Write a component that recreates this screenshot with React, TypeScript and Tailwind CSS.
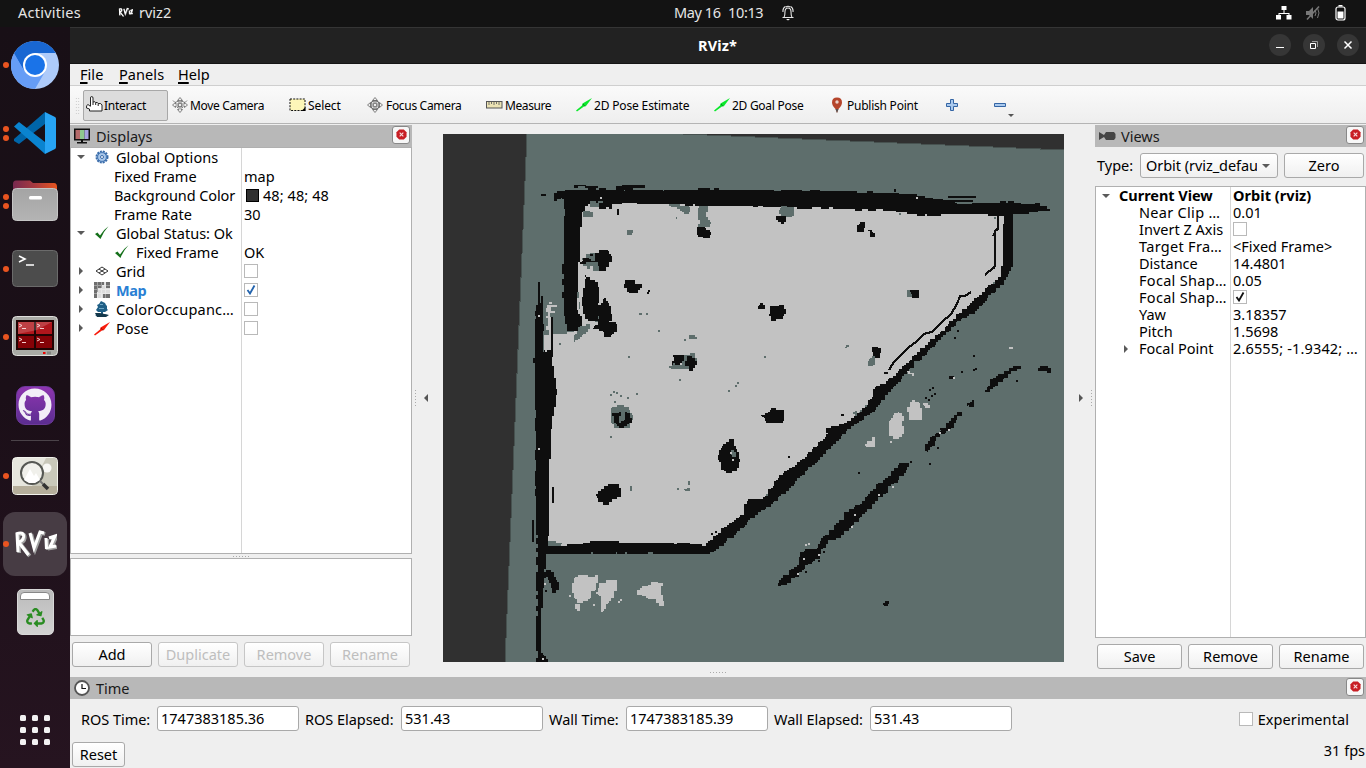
import React from "react";
import { FaGithub, FaRecycle } from "react-icons/fa";

type Pt = [number, number];

/* ---------- occupancy map geometry ---------- */

const CELL = 1.62;
const snap = (v: number) => Math.round(v / CELL) * CELL;

function noise(seed: number) {
  let s = seed * 7919 + 13;
  return () => {
    s = (s * 16807 + 11) % 2147483647;
    return s / 2147483647 - 0.5;
  };
}

// Turns a flat, clockwise x,y list into a closed outline that follows the cell grid.
function cells(flat: number[], amp = 1.6): string {
  const pts: Pt[] = [];
  for (let i = 0; i < flat.length; i += 2) pts.push([flat[i], flat[i + 1]]);
  const rnd = noise(Math.round(flat[0] * 3 + flat[1]));
  let d = "";
  let px = 0;
  let py = 0;
  pts.forEach(([x0, y0], i) => {
    const [x1, y1] = pts[(i + 1) % pts.length];
    const n = Math.max(1, Math.ceil(Math.hypot(x1 - x0, y1 - y0) / 3.2));
    for (let k = 0; k < n; k++) {
      const x = snap(x0 + ((x1 - x0) * k) / n + rnd() * amp);
      const y = snap(y0 + ((y1 - y0) * k) / n + rnd() * amp);
      const xs = x.toFixed(1);
      const ys = y.toFixed(1);
      if (!d) d = `M${xs} ${ys}`;
      else d += (x - px) * (y - py) < 0 ? `V${ys}H${xs}` : `H${xs}V${ys}`;
      px = x;
      py = y;
    }
  });
  return d + "Z";
}

function blob(cx: number, cy: number, rx: number, ry: number): string {
  const flat: number[] = [];
  for (let i = 0; i < 12; i++) {
    const a = (i * Math.PI) / 6;
    flat.push(cx + Math.cos(a) * rx, cy + Math.sin(a) * ry);
  }
  return cells(flat, 2.2);
}

const FREE = [572, 198, 1006, 210, 1006, 270, 970, 305, 940, 333, 905, 365, 872, 399, 840, 429, 800, 467, 755, 504, 712, 546, 544, 549, 544, 334, 574, 333];

const WALLS: number[][] = [
  [553, 195, 560, 192, 570, 190, 590, 189, 615, 190, 635, 190, 680, 190, 710, 189, 760, 190, 797, 190, 848, 192, 890, 193, 914, 195, 930, 199, 960, 204, 990, 203, 1005, 202, 1038, 204, 1044, 207, 1050, 210, 1035, 212, 1013, 214, 1000, 215, 960, 214, 927, 215, 883, 210, 830, 208, 790, 208, 750, 206, 723, 206, 680, 204, 633, 203, 613, 203, 612, 209, 600, 208, 596, 204, 587, 202, 582, 212, 580, 230, 579, 263, 578, 290, 578, 310, 582, 322, 580, 331, 568, 330, 564, 313, 563, 263, 565, 203, 563, 198, 555, 200],
  [546, 546, 580, 545, 592, 541, 613, 542, 653, 543, 693, 544, 712, 547, 712, 552, 707, 554, 673, 554, 633, 553, 613, 553, 593, 553, 573, 554, 546, 554],
  [539, 300, 543, 312, 543, 352, 550, 350, 552, 360, 556, 390, 556, 403, 553, 410, 550, 457, 549, 470, 549, 533, 548, 545, 546, 558, 545, 572, 542, 607, 540, 637, 541, 650, 547, 662, 537, 664, 536, 636, 537, 603, 537, 553, 537, 523, 535, 477, 536, 447, 535, 390, 534, 357, 536, 313],
  [1004, 212, 1013, 213, 1013, 222, 1012, 250, 1012, 265, 1008, 275, 1003, 283, 985, 300, 975, 312, 960, 319, 945, 334, 930, 349, 915, 362, 898, 381, 883, 398, 877, 407, 847, 430, 822, 455, 805, 472, 787, 490, 765, 508, 757, 513, 743, 527, 712, 553, 705, 548, 710, 541, 727, 527, 745, 513, 743, 505, 753, 498, 763, 500, 782, 475, 800, 463, 827, 437, 828, 427, 847, 423, 867, 407, 875, 390, 893, 377, 917, 355, 933, 340, 957, 317, 983, 293, 1000, 277, 1003, 260],
];

const BLACK_SHAPES: number[][] = [
  [572, 185, 599, 187, 599, 188, 573, 187],
  [615, 188, 628, 185, 645, 185, 645, 187, 630, 188, 618, 191],
  [586, 276, 592, 280, 599, 287, 599, 302, 597, 320, 584, 318, 583, 300],
  [604, 298, 607, 304, 612, 310, 612, 318, 608, 322, 618, 325, 618, 330, 608, 336, 602, 330, 592, 328, 600, 320, 599, 310],
  [625, 280, 633, 280, 640, 286, 638, 293, 629, 293, 624, 287],
  [595, 254, 604, 250, 612, 258, 610, 266, 602, 269, 598, 262, 580, 264, 582, 260],
  [697, 227, 706, 228, 711, 233, 707, 238, 697, 235],
  [776, 216, 783, 216, 787, 220, 780, 223],
  [857, 226, 862, 222, 865, 226, 864, 231, 857, 231],
  [867, 229, 871, 232, 875, 236, 871, 236],
  [770, 307, 783, 305, 785, 312, 781, 320, 772, 319, 770, 313],
  [758, 304, 763, 303, 764, 308, 758, 309],
  [871, 347, 878, 348, 881, 350, 878, 358, 872, 355],
  [911, 291, 918, 291, 916, 297, 913, 296],
  [673, 355, 681, 354, 684, 358, 679, 363, 673, 364],
  [686, 357, 693, 357, 696, 363, 691, 370, 686, 365],
  [762, 416, 773, 408, 782, 411, 785, 417, 778, 424, 768, 422],
  [723, 446, 731, 440, 737, 448, 741, 460, 737, 469, 729, 472, 721, 468, 719, 457],
  [596, 495, 605, 486, 619, 485, 620, 496, 606, 504, 597, 501],
  [545, 570, 550, 570, 556, 579, 559, 588, 555, 591, 549, 583],
  [777, 584, 788, 575, 798, 565, 803, 551, 808, 548, 816, 549, 826, 535, 840, 523, 853, 507, 862, 503, 874, 490, 890, 475, 899, 465, 908, 465, 905, 472, 893, 483, 878, 498, 866, 511, 850, 527, 838, 537, 828, 541, 818, 556, 802, 570, 787, 584, 780, 586],
  [924, 451, 930, 440, 938, 432, 950, 424, 955, 416, 961, 412, 959, 418, 950, 429, 939, 436, 931, 445, 927, 451],
  [968, 406, 973, 400, 975, 403, 972, 406],
  [985, 392, 991, 386, 991, 380, 1004, 373, 1014, 366, 1019, 367, 1007, 375, 995, 385, 989, 392],
  [1035, 368, 1046, 366, 1051, 370, 1046, 372, 1039, 370],
  [949, 377, 954, 376, 955, 379, 950, 379],
  [883, 604, 888, 600, 889, 602, 885, 607],
];

const THIN_LINES = [
  "M998 215v14l-3 2v35l-2 3M993 268l-8 7M993 236l4-8",
  "M971 292l-6 4h-5l-3 8-6 10-9 8-10 10-8 2-8 8-8 6-6 6-8 8-5 8",
  "M884 373h4M841 415h3M788 457h2",
  "M539 282v24M542 296v20M552 317v40M533 520v22M553 487v16",
  "M618 209v6M895 189v3M925 201h48M930 205h25M948 197h28M940 203h15M541 195h5",
];

const TEAL_SPOTS: number[][] = [
  [583, 210, 592, 212, 592, 217, 583, 217],
  [590, 202, 602, 201, 600, 207, 590, 207],
  [668, 205, 690, 206, 691, 211, 686, 214, 680, 208],
  [699, 206, 706, 206, 708, 220, 712, 222, 708, 227, 698, 227],
  [780, 207, 793, 207, 793, 216, 786, 218, 780, 216],
  [582, 258, 596, 253, 600, 262, 599, 271, 590, 271, 584, 267],
  [628, 231, 633, 231, 632, 235, 628, 234],
  [673, 218, 677, 218, 676, 219, 672, 219],
  [577, 292, 579, 291, 580, 310, 578, 309],
  [573, 338, 580, 328, 589, 325, 588, 330, 576, 341, 573, 342],
  [593, 318, 603, 317, 605, 325, 598, 326],
  [669, 368, 684, 355, 694, 354, 697, 362, 690, 368, 675, 369],
  [612, 407, 620, 405, 627, 408, 633, 417, 628, 427, 616, 427, 611, 420],
  [688, 338, 692, 336, 697, 338, 690, 339],
  [845, 348, 848, 345, 848, 346, 845, 349],
  [869, 358, 875, 358, 874, 365, 869, 365],
  [907, 291, 914, 290, 913, 296, 907, 296],
  [549, 539, 552, 541, 562, 543, 552, 546, 548, 545],
  [684, 489, 689, 487, 689, 490, 685, 490],
  [630, 487, 633, 487, 633, 490, 630, 490],
];

const FREE_SPOTS: number[][] = [
  [573, 579, 580, 576, 598, 577, 596, 587, 589, 597, 582, 604, 577, 601, 573, 592],
  [575, 606, 579, 605, 579, 611, 575, 610],
  [601, 586, 609, 579, 617, 581, 615, 593, 605, 605, 602, 612, 600, 605, 603, 598, 597, 591],
  [638, 590, 650, 585, 655, 581, 662, 584, 662, 597, 663, 605, 655, 600, 647, 596, 638, 595],
  [891, 419, 898, 412, 902, 415, 903, 425, 901, 439, 893, 439, 889, 430],
  [906, 410, 914, 400, 920, 405, 922, 415, 920, 420, 911, 419],
  [925, 404, 930, 402, 928, 407, 926, 408],
  [865, 445, 873, 438, 874, 446, 866, 448],
  [909, 372, 913, 372, 913, 376, 910, 374],
];

// x, y pairs of single cells
const BLACK_DOTS = [957, 330, 954, 337, 973, 355, 975, 368, 973, 369, 961, 371, 931, 395, 928, 399, 934, 393, 929, 389, 932, 387, 858, 472, 910, 461, 929, 463, 937, 447, 1016, 380, 648, 290, 647, 292, 545, 590, 925, 397, 940, 428, 947, 425, 823, 551, 818, 560, 805, 571, 769, 314, 837, 430, 711, 533, 715, 531];
const TEAL_DOTS = [610, 394, 616, 392, 613, 391, 620, 395, 636, 393, 640, 313, 646, 313, 639, 313, 684, 339, 735, 385, 728, 390, 737, 382, 679, 379, 610, 436, 614, 401, 559, 343, 764, 356, 677, 488, 688, 481, 688, 483, 627, 397, 628, 356, 658, 330, 853, 412, 855, 411, 899, 213, 994, 217, 673, 363];
const FREE_DOTS = [1009, 347, 1011, 347, 916, 197, 953, 377, 600, 197, 538, 448, 544, 583, 542, 658, 939, 432, 948, 429, 892, 486, 854, 514, 851, 526, 818, 554, 803, 558, 805, 544, 808, 543, 618, 601, 620, 599, 593, 604, 596, 592, 878, 494, 680, 363, 730, 452, 732, 459, 569, 595, 890, 441, 797, 573, 538, 315, 545, 350];

const TEAL_OVER: number[][] = [
  [620, 413, 625, 412, 626, 414, 623, 421, 619, 422],
  [731, 450, 735, 453, 734, 456, 731, 454],
  [589, 257, 595, 255, 594, 260, 588, 260],
];

function dots(list: number[]): string {
  let d = "";
  for (let i = 0; i < list.length; i += 2) d += `M${list[i]} ${list[i + 1]}h2v2h-2z`;
  return d;
}

function MapView() {
  return (
    <svg viewBox="443 134 621 528" className="block h-[528px] w-[621px] bg-[#303030]" shapeRendering="crispEdges">
      <path d="M527 134H683L1064 150V662H505Z" fill="#5e6e6c" />
      <path d="M527 134L505 662M683 134L1064 150" stroke="#475250" fill="none" />
      <path d={cells(FREE)} fill="#c2c2c2" />
      <path d="M543 300h22v33h-13v2h-9z" fill="#5e6e6c" />
      <path d="M549 302h3v2h-3zM547 305h10v2h-6v4h4v2h-5v4h3v10h-2v10h-2v-7h-3v-4h2v-8h-2v-2h2v-4h-2zM547 348h2v3h-2z" fill="#c2c2c2" />
      <path d={FREE_SPOTS.map((p) => cells(p, 2.6)).join("")} fill="#c2c2c2" />
      <path d={WALLS.map((p) => cells(p)).join("")} fill="#0e0e0e" />
      <path d={TEAL_SPOTS.map((p) => cells(p, 2)).join("")} fill="#5e6e6c" />
      <path d="M583 266h4v3h3v-3h3v6h4v4h-4v4h-6v-2h-4v24h-4v8h-2v-12h2v-20h-1v-12h5z" fill="#c2c2c2" />
      <path d={BLACK_SHAPES.map((p) => cells(p, 2.4)).join("")} fill="#0e0e0e" />
      <path d={blob(622, 418, 9, 8)} fill="#0e0e0e" />
      <path d={cells([613, 407, 625, 407, 627, 410, 620, 412, 612, 412])} fill="#5e6e6c" />
      <path d={TEAL_OVER.map((p) => cells(p, 1)).join("")} fill="#5e6e6c" />
      <path d={THIN_LINES.join("")} stroke="#0e0e0e" strokeWidth="2.200" fill="none" />
      <path d="M590 322h8v3h-4v3h-4z" fill="#c2c2c2" />
      <path d={dots(TEAL_DOTS)} fill="#5e6e6c" />
      <path d={dots(BLACK_DOTS)} fill="#0e0e0e" />
      <path d={dots(FREE_DOTS)} fill="#c2c2c2" />
    </svg>
  );
}

/* ---------- dock ---------- */

function ChromiumIcon() {
  return (
    <svg viewBox="0 0 48 48" className="size-12">
      <circle cx="24" cy="24" r="24" fill="#aecbfa" />
      <path d="M24 24L3.200 12A24 24 0 0 0 24 48L34.400 30z" fill="#669df6" />
      <path d="M3.200 12A24 24 0 0 1 44.800 12H24L13.600 30z" fill="#1967d2" />
      <path d="M3.200 12L13.600 30 24 24z" fill="#1967d2" />
      <circle cx="24" cy="24" r="12" fill="#fff" />
      <circle cx="24" cy="24" r="10" fill="#1a73e8" />
    </svg>
  );
}

function CodeIcon() {
  return (
    <svg viewBox="0 0 42 42" className="size-[42px]">
      <path d="M0 27L31 0V12L5 32 0 29z" fill="#0065a9" />
      <path d="M5 10L31 30V42L0 14.500z" fill="#0a84d0" />
      <path d="M31 0L41 5Q42 5.500 42 7V35Q42 36.500 41 37L31 42z" fill="#27a4f4" />
    </svg>
  );
}

function FilesIcon() {
  return (
    <svg viewBox="0 0 46 41" className="-mt-px h-[41px] w-[46px]">
      <defs>
        <linearGradient id="fo"><stop stopColor="#77294f" /><stop offset=".5" stopColor="#a83a3f" /><stop offset="1" stopColor="#e8551f" /></linearGradient>
        <linearGradient id="fg" x2="0" y2="1"><stop stopColor="#a4a4a4" /><stop offset="1" stopColor="#b4b4b4" /></linearGradient>
      </defs>
      <path d="M1 14V4Q1 .5 4 .500H18L21 3H42Q45 3 45 7V14z" fill="url(#fo)" />
      <rect x=".5" y="8.500" width="45" height="32" rx="4" fill="url(#fg)" stroke="#c5c5c5" />
      <rect x="17" y="16" width="13" height="3.500" rx="1.500" fill="#fff" />
    </svg>
  );
}

function TerminalIcon() {
  return (
    <svg viewBox="0 0 46 37" className="-mt-px h-[37px] w-[46px]">
      <rect x=".5" y=".5" width="45" height="36" rx="4" fill="#4c4c4c" stroke="#6b6b6b" />
      <path d="M7 6l6 3-6 3M14 15h8" stroke="#fff" strokeWidth="1.600" fill="none" />
    </svg>
  );
}

function TerminatorIcon() {
  const panes: Pt[] = [[6, 6], [24, 6], [6, 20], [24, 20]];
  return (
    <svg viewBox="0 0 46 40" className="-mt-0.5 h-10 w-[46px]">
      <rect x=".5" y=".5" width="45" height="39" rx="4" fill="#a9aaa5" stroke="#dededb" />
      <rect x="4" y="4" width="38" height="30" fill="#210404" />
      {panes.map(([x, y]) => (
        <g key={`${x}-${y}`}>
          <rect x={x} y={y} width="16" height="12" fill={y < 10 ? "#b0161c" : "#850207"} />
          <path d={`M${x + 1} ${y + 2}l3 1.500-3 1.500M${x + 4} ${y + 6.500}h4`} stroke="#f6cccc" fill="none" />
        </g>
      ))}
      <path d="M6 6H40L25 14 6 18z" fill="#fff" opacity=".18" />
      <rect x="31" y="36" width="2.500" height="2" fill="#e00" />
      <rect x="35" y="35.500" width="4" height="3" fill="#838481" />
    </svg>
  );
}

function GithubIcon() {
  return (
    <div className="flex size-[39px] items-center justify-center rounded-[9px] border border-[#6d3a9b] bg-linear-to-b from-[#8e35b0] to-[#5c2d91]">
      <FaGithub className="size-[34px] text-[#f2eef7]" />
    </div>
  );
}

function ViewerIcon() {
  return (
    <svg viewBox="0 0 46 38" className="h-[38px] w-[46px]">
      <rect x=".5" y=".5" width="45" height="37" rx="4" fill="#e6e6de" stroke="#f2f2ec" />
      <path d="M34 1h8q3 0 3 3v25H20z" fill="#c9c8ba" />
      <path d="M1 29H45V34Q45 37 42 37H4Q1 37 1 34z" fill="#b5ae9b" />
      <circle cx="35" cy="11" r="4.500" fill="#f8f8f5" />
      <circle cx="20" cy="16" r="11" fill="#f0f0eb" stroke="#555753" strokeWidth="2" />
      <path d="M12 23l6-11 4 7 2-3 4 7-5 3h-6z" fill="#fff" />
      <path d="M28 24l3 3" stroke="#777" strokeWidth="2" />
      <path d="M31 27l5 5" stroke="#333" strokeWidth="3.500" />
    </svg>
  );
}

function RvizMark({ className }: { className: string }) {
  const strokes = "M4 3L5 22M3 4q8-3 7.500 3-.5 4-5 5l10 13M17 3l4 15L27 2l4 1M33 8l.5 11M36 8l6-2-5 11 6-1";
  return (
    <svg viewBox="0 0 44 28" className={className} fill="none">
      <path d={strokes} stroke="#a2a2a2" strokeWidth="3.800" transform="translate(1.200 1)" />
      <path d={strokes} stroke="#fff" strokeWidth="3.100" />
    </svg>
  );
}

function TrashIcon() {
  return (
    <div className="flex h-[46px] w-[37px] flex-col items-center rounded-[5px] border border-[#d8d8d8] bg-linear-to-b from-[#bbb] to-[#d2d2d2] pt-0.5">
      <div className="h-[8px] w-[30px] rounded-t-[4px] border border-[#888] bg-white" />
      <FaRecycle className="mt-2 size-[19px] text-[#2a8c22]" />
    </div>
  );
}

function DockItem({ dots: count = 1, active = false, children }: { dots?: number; active?: boolean; children: React.ReactNode }) {
  return (
    <div className="flex h-[68px] w-[70px] shrink-0 items-center">
      <div className={`ml-[3px] flex h-16 w-16 items-center rounded-[12px] ${active ? "bg-[#473c44]" : ""}`}>
        <div className="flex w-[6px] flex-col gap-[3px]">
          {Array.from({ length: count }, (_, i) => (
            <span key={i} className="size-[6px] rounded-full bg-[#e95420]" />
          ))}
        </div>
        <div className="flex w-[52px] items-center justify-center">{children}</div>
      </div>
    </div>
  );
}

function Dock() {
  return (
    <nav className="flex w-[70px] shrink-0 flex-col bg-linear-to-b from-[#180f16] via-[#1b0f18] to-[#261420] pt-1">
      <DockItem><ChromiumIcon /></DockItem>
      <DockItem dots={2}><CodeIcon /></DockItem>
      <DockItem dots={2}><FilesIcon /></DockItem>
      <DockItem><TerminalIcon /></DockItem>
      <DockItem><TerminatorIcon /></DockItem>
      <DockItem dots={0}><GithubIcon /></DockItem>
      <div className="mx-[11px] my-px h-px shrink-0 bg-[#4b4349]" />
      <DockItem><ViewerIcon /></DockItem>
      <DockItem active><RvizMark className="h-7 w-11" /></DockItem>
      <DockItem dots={0}><TrashIcon /></DockItem>
      <div className="mt-auto mb-[23px] grid grid-cols-3 gap-[6px] self-center">
        {Array.from({ length: 9 }, (_, i) => (
          <span key={i} className="size-[6px] rounded-[1.5px] bg-[#f2f2f2]" />
        ))}
      </div>
    </nav>
  );
}

/* ---------- bars ---------- */

function TopBar() {
  return (
    <header className="grid h-[27px] shrink-0 grid-cols-[683px_1fr] bg-[#131313] pb-0.5 text-[14.5px] leading-[25px] text-[#e6e6e6]">
      <div className="flex items-center pl-[18px]">
        <span className="w-[100px] tracking-[0.25px]">Activities</span>
        <RvizMark className="h-[11px] w-[15px]" />
        <span className="ml-[6px]">rviz2</span>
      </div>
      <div className="flex items-center">
        <span className="-ml-[9px] w-[54px] tracking-[-0.4px]">May 16</span>
        <span className="tracking-[-0.35px]">10:13</span>
        <svg viewBox="0 0 14 16" className="ml-[18px] h-4 w-3.5" fill="none" stroke="#e6e6e6" strokeWidth="1.100">
          <path d="M1.500 12.500h11M3 12.500q1-1.500 1-6Q4.200 3 7 3t3 3.500q0 4.500 1 6M2 7Q1.500 3 4.500 1.500M12 7Q12.500 3 9.500 1.500M5 2Q7 .5 9 2" />
          <path d="M5 14h4l-2 1.500z" fill="#fff" stroke="none" />
        </svg>
        <div className="mr-[20px] ml-auto flex items-center">
          <svg viewBox="0 0 16 14" className="h-3.5 w-4" fill="#fff">
            <path d="M5.500 0h5v4h-5zM0 9h5v4.500H0zM10.500 9h5v4.500h-5zM7.500 4h1v3h5v2h-1V8h-9v1h-1V7h5z" />
          </svg>
          <svg viewBox="0 0 16 14" className="ml-[13px] h-3.5 w-4" fill="none" stroke="#777">
            <path d="M1 5h3l4-4v12L4 9H1z" fill="#777" stroke="none" />
            <path d="M10 4q2 3 0 6M12.500 2q3 5 0 10" />
            <path d="M2 13.500L14 .500" stroke="#777" strokeWidth="1.500" />
          </svg>
          <svg viewBox="0 0 11 16" className="ml-[14px] h-4 w-[11px]">
            <path d="M3.500 0h4v1.500h-4z" fill="#fff" />
            <rect x="1" y="2" width="9" height="13" rx="2" fill="none" stroke="#fff" strokeWidth="1.200" />
            <rect x="2.500" y="6.500" width="6" height="7" fill="#fff" />
          </svg>
        </div>
      </div>
    </header>
  );
}

function TitleBar() {
  return (
    <div className="grid h-[37px] shrink-0 grid-cols-[1fr_auto_1fr] items-center border-t border-b border-t-[#353535] border-b-[#151515] bg-[#222] pr-[7px]">
      <span />
      <span className="pl-1.5 text-[14.5px] font-bold tracking-[0.15px] text-white">RViz*</span>
      <div className="flex justify-end gap-3 pb-px">
        <span className="flex size-[22px] items-center justify-center rounded-full bg-[#363636]">
          <svg viewBox="0 0 10 10" className="size-2.5" shapeRendering="crispEdges"><path d="M1 7h8v1H1z" fill="#fff" /></svg>
        </span>
        <span className="flex size-[22px] items-center justify-center rounded-full bg-[#363636]">
          <svg viewBox="0 0 10 10" className="size-2.5" fill="none" stroke="#fff">
            <path d="M1.500 3.500h5v5h-5z" /><path d="M3 1.500h5.500V7" stroke="#999" />
          </svg>
        </span>
        <span className="flex size-[22px] items-center justify-center rounded-full bg-[#363636]">
          <svg viewBox="0 0 10 10" className="size-2.5" stroke="#fff" strokeWidth="1.500"><path d="M1.500 1.500l7 7M8.500 1.500l-7 7" /></svg>
        </span>
      </div>
    </div>
  );
}

function MenuBar() {
  const items = [["F", "ile", "w-[39px]"], ["P", "anels", "w-[59px]"], ["H", "elp", "w-[40px]"]];
  return (
    <div className="flex h-[22px] shrink-0 items-center border-b border-[#cfcfcf] bg-[#efefef] pl-[10px] text-[14.5px] leading-[21px]">
      {items.map(([k, rest, w]) => (
        <span key={k} className={w}>
          <span className="underline decoration-[1.5px] underline-offset-2">{k}</span>
          <span className="tracking-[0.1px]">{rest}</span>
        </span>
      ))}
    </div>
  );
}

function CrossArrows({ round = false }: { round?: boolean }) {
  return (
    <svg viewBox="0 0 16 16" className="size-4 shrink-0" fill="#eee" stroke="#666" strokeWidth=".800">
      <path d="M8 .5l2.500 3H9v3.500h3.500V5.500L15.500 8l-3 2.500V9H9v3.500h1.500L8 15.500l-2.500-3H7V9H3.500v1.500L.5 8l3-2.500V7H7V3.500H5.500z" />
      {round ? <circle cx="8" cy="8" r="4.300" fill="none" strokeWidth="1.200" /> : <path d="M1 3.500l2 2 5-2 5 2 2-2M5 11l2-2M11 11L9 9" fill="none" />}
      <circle cx="8" cy="8" r="1.800" />
    </svg>
  );
}

function PoseArrow({ color }: { color: string }) {
  return (
    <svg viewBox="0 0 16 14" className="h-3.5 w-4 shrink-0">
      <path d="M0 12.500L6 7.500 6.500 5.500 16 0 10 8l-2 .500-7 5z" fill={color} />
      <path d="M7 6l2 2.500" stroke="#000" strokeOpacity=".4" />
    </svg>
  );
}

function HandIcon() {
  return (
    <svg viewBox="0 0 17 17" className="-mt-px size-[17px] shrink-0" fill="#fff" stroke="#222">
      <path d="M4.500 10V2q0-1.500 1.200-1.500T7 2v4q2.500-.8 2.700.5 2-.5 2.500 1 3.300-.5 3.800 1.500v6H3.500V13L.5 12Q0 9 2 8.500L4.500 10.500M7 6v3M9.700 6.500V9M12.200 7.500V10" />
    </svg>
  );
}

function Toolbar() {
  return (
    <div className="flex h-[38px] shrink-0 items-center border-b border-[#b4b4b4] bg-linear-to-b from-[#fafafa] to-[#eee] pt-px text-[12px] leading-[29px] whitespace-nowrap">
      <div className="ml-[5px] h-[17px] w-[5px] bg-[radial-gradient(#c4c4c4_0.7px,transparent_0.8px)] bg-[size:2.500px_3px]" />
      <div className="ml-[3px] flex h-[31px] w-[85px] items-center rounded-[2px] border border-[#a8a8a8] bg-[#dcdcdc] pl-0.5">
        <HandIcon />
        <span className="ml-px tracking-[-0.25px]">Interact</span>
      </div>
      <div className="ml-1 flex w-[117px] items-center gap-0.5"><CrossArrows /><span className="tracking-[-0.32px]">Move Camera</span></div>
      <div className="flex w-[78px] items-center gap-[2px]">
        <svg viewBox="0 0 17 14" className="h-3.5 w-[17px]"><rect x="1" y="1" width="15" height="11.500" fill="#fdf6b8" stroke="#111" strokeDasharray="2 1.200" /><path d="M16.500 9v4h-4z" /></svg>
        <span className="tracking-[-0.1px]">Select</span>
      </div>
      <div className="flex w-[119px] items-center gap-[3px]"><CrossArrows round /><span className="tracking-[-0.32px]">Focus Camera</span></div>
      <div className="flex w-[90px] items-center gap-0.5">
        <svg viewBox="0 0 17 8" className="h-2 w-[17px] shrink-0"><rect x=".5" y=".5" width="15.500" height="6.500" fill="#ece3b4" stroke="#555" /><path d="M3 1v3M5.500 1v2M8 1v3M10.500 1v2M13 1v3" stroke="#555" strokeWidth=".800" /></svg>
        <span className="tracking-[-0.4px]">Measure</span>
      </div>
      <div className="flex w-[138px] items-center gap-0.5"><PoseArrow color="#0be82c" /><span className="tracking-[-0.16px]">2D Pose Estimate</span></div>
      <div className="flex w-[117px] items-center gap-0.5"><PoseArrow color="#0be82c" /><span className="tracking-[-0.28px]">2D Goal Pose</span></div>
      <div className="flex w-[115px] items-center gap-1">
        <svg viewBox="0 0 12 17" className="h-[17px] w-3"><path d="M6 .5Q11 .5 11 5.500 11 8.500 7.500 12L6 16 4.500 12Q1 8.500 1 5.500 1 .5 6 .5z" fill="#b5452b" /><path d="M7.500 12L6 16 4.500 12z" fill="#555" /><circle cx="6" cy="5" r="1.700" fill="#ecd2c9" /></svg>
        <span className="tracking-[-0.24px]">Publish Point</span>
      </div>
      <svg viewBox="0 0 12 12" className="size-3"><path d="M4.500.5h3v4h4v3h-4v4h-3v-4h-4v-3h4z" fill="#a9c9ee" stroke="#3465a4" /></svg>
      <svg viewBox="0 0 12 4" className="ml-9 h-1 w-3"><path d="M.5.5h11v3H.5z" fill="#a9c9ee" stroke="#3465a4" /></svg>
      <svg viewBox="0 0 6 3" className="mt-[21px] ml-[2px] h-[3px] w-[6px]"><path d="M0 0h6L3 3z" fill="#555" /></svg>
    </div>
  );
}

/* ---------- panels ---------- */

function CloseButton() {
  return (
    <span className="mr-[2px] mb-0.5 ml-auto flex size-[18px] items-center justify-center rounded-[3px] border border-[#888] bg-[#f7f7f7]">
      <svg viewBox="0 0 12 12" className="mb-px size-[11px]">
        <path d="M3.500.5h5l3 3v5l-3 3h-5l-3-3v-5z" fill="#c81e24" />
        <path d="M4 4l4 4M8 4L4 8" stroke="#fff" strokeOpacity=".85" strokeWidth="1.200" />
      </svg>
    </span>
  );
}

function PanelTitle({ icon, label }: { icon: React.ReactNode; label: string }) {
  return (
    <div className="flex h-[22px] shrink-0 items-center bg-[#b8b8b8] text-[14.5px] leading-[22px] text-[#1a1a1a]">
      <span className="ml-1 flex w-[22px] items-center">{icon}</span>
      <span>{label}</span>
      <CloseButton />
    </div>
  );
}

function Button({ label, width, disabled = false }: { label: string; width: string; disabled?: boolean }) {
  return (
    <button className={`${width} h-[25px] rounded-[3px] border bg-linear-to-b from-white to-[#f0f0f0] text-center text-[14.5px] leading-[23px] ${disabled ? "border-[#c6c6c6] text-[#bebebe]" : "border-[#a9a9a9] text-black"}`}>
      {label}
    </button>
  );
}

function Check({ on = false, color = "#111" }: { on?: boolean; color?: string }) {
  return (
    <span className="mb-0.5 flex size-3.5 shrink-0 items-center justify-center border border-[#b9b9b9] bg-white">
      {on && <svg viewBox="0 0 10 10" className="size-2.5" fill="none" stroke={color} strokeWidth="1.800"><path d="M1.500 5L4 8.500 8.500.5" /></svg>}
    </span>
  );
}

function Arrow({ open }: { open: boolean }) {
  return (
    <svg viewBox="0 0 8 8" className="size-2" fill="#5a5a5a">
      <path d={open ? "M0 2h8L4 6z" : "M2 0l4 4-4 4z"} />
    </svg>
  );
}

const Tick = () => (
  <svg viewBox="0 0 14 14" className="mb-px ml-px size-3.5"><path d="M0 8l2.500-1.500L5 9.500Q8 4 13.500.200 8 6 5.500 13z" fill="#15701a" /></svg>
);

const Gear = () => (
  <svg viewBox="0 0 14 14" className="mb-0.5 ml-px size-3.5">
    <circle cx="7" cy="7" r="5.500" fill="#8db4e2" stroke="#3a6ba8" strokeWidth="2" strokeDasharray="1.900 1" />
    <circle cx="7" cy="7" r="4.400" fill="#a9c7ea" stroke="#4677b2" />
    <circle cx="7" cy="7" r="1.500" fill="#fff" stroke="#3a6ba8" />
  </svg>
);

const GridIcon = () => (
  <svg viewBox="0 0 14 10" className="mb-px ml-px h-2.5 w-3.5" fill="none" stroke="#333"><path d="M7 1l6 4-6 4-6-4zM4 3l6 4M10 3L4 7" /></svg>
);

const MapIcon = () => (
  <svg viewBox="0 0 16 16" className="mb-px size-4" shapeRendering="crispEdges">
    <path d="M0 0h16v16H0z" fill="#ddd" />
    <path d="M0 0h10v3H8v3H4v4H3v6H0zM12 0h4v6h-4zM9 12h7v4H9z" fill="#6f6f6f" />
    <path d="M0 3.500h16M0 7.500h16M0 11.500h16M3.500 0v16M7.500 0v16M11.500 0v16" stroke="#fff" strokeOpacity=".35" />
  </svg>
);

const TreeIcon = () => (
  <svg viewBox="0 0 16 16" className="mb-px size-4">
    <path d="M7 0l2 1 2 1 1 2 1 1v3l1 1-3 2H9v2l5 1-3 2H4l-3-2 6-1v-2H4L2 9l2-3-1-2 2-1z" fill="#1f5f86" />
    <path d="M6 3h3v1H6zM5 7h5v1H5z" fill="#6da5c4" />
    <path d="M1 12h5l9 2-3 2H3z" fill="#14384b" />
  </svg>
);

type Row = { label: string; value?: React.ReactNode; arrow?: boolean; icon?: React.ReactNode; indent?: string; text?: string };

const displayRows: Row[] = [
  { label: "Global Options", arrow: true, icon: <Gear />, text: "tracking-[0.05px]" },
  { label: "Fixed Frame", value: "map", indent: "pl-[43px]" },
  { label: "Background Color", value: <><span className="mr-[4px] ml-[2px] size-[13px] border border-black bg-[#303030]" /><span className="tracking-[0.08px]">48; 48; 48</span></>, indent: "pl-[43px]", text: "tracking-[-0.1px]" },
  { label: "Frame Rate", value: "30", indent: "pl-[43px]", text: "tracking-[0.05px]" },
  { label: "Global Status: Ok", arrow: true, icon: <Tick /> },
  { label: "Fixed Frame", value: "OK", icon: <Tick />, indent: "pl-[43px]" },
  { label: "Grid", arrow: false, icon: <GridIcon />, value: <Check /> },
  { label: "Map", arrow: false, icon: <MapIcon />, value: <Check on color="#2263ad" />, text: "font-bold tracking-[-0.4px] text-[#2a7fd4]" },
  { label: "ColorOccupanc…", arrow: false, icon: <TreeIcon />, value: <Check />, text: "tracking-[0.2px]" },
  { label: "Pose", arrow: false, icon: <PoseArrow color="#f81c0c" />, value: <Check /> },
];

function DisplaysPanel() {
  return (
    <section className="flex w-[342px] shrink-0 flex-col">
      <PanelTitle
        label="Displays"
        icon={
          <svg viewBox="0 0 16 16" className="size-4">
            <path d="M0 .5h16v12H0z" fill="#111" /><path d="M1.500 2h4.500v9H1.500z" fill="#b56a6a" /><path d="M6 2h4.500v9H6z" fill="#8fc98f" /><path d="M10.500 2h4v9h-4z" fill="#a7a3e0" />
            <path d="M7 12h2v2h4v1.500H3V14h4z" fill="#111" />
          </svg>
        }
      />
      <div className="flex h-[407px] shrink-0 border border-[#b0b0b0] bg-white text-[14.5px] leading-[19px]">
        <div className="w-[171px] shrink-0 border-r border-[#d6d6d6]">
          {displayRows.map((r, i) => (
            <div key={i} className={`flex h-[19px] items-center whitespace-nowrap ${r.indent ?? "pl-[6px]"}`}>
              {r.arrow !== undefined && <span className="mr-[9px] flex w-2 pb-px"><Arrow open={r.arrow} /></span>}
              {r.icon && <span className="flex w-[22px] items-center">{r.icon}</span>}
              <span className={r.text ?? ""}>{r.label}</span>
            </div>
          ))}
        </div>
        <div className="pl-[2px]">
          {displayRows.map((r, i) => (
            <div key={i} className="flex h-[19px] items-center">{r.value}</div>
          ))}
        </div>
      </div>
      <div className="flex h-1 shrink-0 items-center justify-center">
        <span className="h-px w-4 bg-[repeating-linear-gradient(90deg,#aaa_0_1px,transparent_1px_3px)]" />
      </div>
      <div className="h-[78px] shrink-0 border border-[#b0b0b0] bg-white" />
      <div className="mt-[6px] flex gap-[6px] pl-[2px]">
        <Button label="Add" width="w-20" />
        <Button label="Duplicate" width="w-20" disabled />
        <Button label="Remove" width="w-20" disabled />
        <Button label="Rename" width="w-20" disabled />
      </div>
    </section>
  );
}

const viewRows: Row[] = [
  { label: "Current View", value: <b className="tracking-[0.05px]">Orbit (rviz)</b>, arrow: true, text: "font-bold tracking-[-0.03px]" },
  { label: "Near Clip …", value: "0.01", text: "tracking-[0.3px]" },
  { label: "Invert Z Axis", value: <Check /> },
  { label: "Target Fra…", value: "<Fixed Frame>", text: "tracking-[0.3px]" },
  { label: "Distance", value: "14.4801" },
  { label: "Focal Shap…", value: "0.05", text: "tracking-[0.3px]" },
  { label: "Focal Shap…", value: <Check on />, text: "tracking-[0.3px]" },
  { label: "Yaw", value: "3.18357" },
  { label: "Pitch", value: "1.5698" },
  { label: "Focal Point", value: <span className="tracking-[0.15px]">2.6555; -1.9342; …</span>, arrow: false },
];

function ViewsPanel() {
  return (
    <section className="flex w-[271px] shrink-0 flex-col">
      <PanelTitle
        label="Views"
        icon={<svg viewBox="0 0 17 10" className="h-2.5 w-[17px]"><path d="M0 1l5 3 2-3h8l1.500 2v4L15 9H7L5 6 0 9z" fill="#454545" /></svg>}
      />
      <div className="mt-[6px] flex items-center pl-[2px] text-[14.5px]">
        <span className="w-[43px]">Type:</span>
        <div className="flex h-[25px] w-[138px] items-center justify-between rounded-[3px] border border-[#a9a9a9] bg-linear-to-b from-white to-[#f0f0f0] pr-[7px] pl-[5px]">
          <span className="w-[111px] overflow-hidden leading-[23px] tracking-[-0.05px] whitespace-nowrap">Orbit (rviz_defau</span>
          <Arrow open />
        </div>
        <span className="w-[6px]" />
        <Button label="Zero" width="w-20" />
      </div>
      <div className="mt-2 flex h-[452px] shrink-0 border border-[#b0b0b0] bg-white text-[14.5px] leading-[17px]">
        <div className="w-[135px] shrink-0 border-r border-[#d6d6d6]">
          {viewRows.map((r, i) => (
            <div key={i} className={`flex h-[17px] items-center whitespace-nowrap ${i === 0 ? "pl-[6px]" : r.arrow === undefined ? "pl-[43px]" : "pl-[26px]"}`}>
              {r.arrow !== undefined && <span className="mr-[9px] flex w-2"><Arrow open={r.arrow} /></span>}
              <span className={r.text ?? ""}>{r.label}</span>
            </div>
          ))}
        </div>
        <div className="pl-[2px]">
          {viewRows.map((r, i) => (
            <div key={i} className="flex h-[17px] items-center whitespace-nowrap">{r.value}</div>
          ))}
        </div>
      </div>
      <div className="mt-[6px] flex gap-[6px] pl-[2px]">
        <Button label="Save" width="w-[85px]" />
        <Button label="Remove" width="w-[85px]" />
        <Button label="Rename" width="w-[85px]" />
      </div>
    </section>
  );
}

const SideGrip = () => <span className="h-4 w-px bg-[repeating-linear-gradient(#aaa_0_1px,transparent_1px_3px)]" />;

function Center() {
  return (
    <main className="flex flex-1 items-start pt-[9px]">
      <div className="flex h-[528px] w-[31px] items-center gap-2 pl-[3px]">
        <SideGrip />
        <svg viewBox="0 0 4 8" className="h-2 w-1"><path d="M4 0v8L0 4z" fill="#555" /></svg>
      </div>
      <MapView />
      <div className="flex h-[528px] w-[31px] items-center justify-end gap-2 pr-[3px]">
        <svg viewBox="0 0 4 8" className="h-2 w-1"><path d="M0 0v8l4-4z" fill="#555" /></svg>
        <SideGrip />
      </div>
    </main>
  );
}

function Field({ label, value, width }: { label: string; value: string; width: string }) {
  return (
    <>
      <span className={`${width} shrink-0 pt-0.5 tracking-[-0.03px]`}>{label}</span>
      <span className="mr-[6px] h-[25px] w-[142px] shrink-0 rounded-[3px] border border-[#a9a9a9] bg-white pl-[3px] leading-[23px]">{value}</span>
    </>
  );
}

function TimePanel() {
  return (
    <section className="flex h-[91px] shrink-0 flex-col">
      <div className="-mt-[4px] flex h-[4px] shrink-0 items-start justify-center">
        <span className="-mt-px h-px w-4 bg-[repeating-linear-gradient(90deg,#aaa_0_1px,transparent_1px_3px)]" />
      </div>
      <PanelTitle
        label="Time"
        icon={<svg viewBox="0 0 16 16" className="size-4" fill="none"><circle cx="8" cy="8" r="7" fill="#fff" stroke="#555" strokeWidth="1.800" /><path d="M8 4v4.500h4" stroke="#111" strokeWidth="1.200" /></svg>}
      />
      <div className="mt-[7px] flex h-[25px] items-center pl-[11px] text-[14.5px]">
        <Field label="ROS Time:" value="1747383185.36" width="w-[76px]" />
        <Field label="ROS Elapsed:" value="531.43" width="w-[96px]" />
        <Field label="Wall Time:" value="1747383185.39" width="w-[77px]" />
        <Field label="Wall Elapsed:" value="531.43" width="w-[96px]" />
        <div className="mr-[17px] ml-auto flex items-center gap-[5px] pt-0.5"><Check /><span className="tracking-[0.08px]">Experimental</span></div>
      </div>
      <div className="mt-[11px] flex items-center justify-between pr-px pl-[2px] text-[14.5px]">
        <Button label="Reset" width="w-[53px]" />
        <span className="-mt-[7px]">31 fps</span>
      </div>
    </section>
  );
}

export default function App() {
  return (
    <div className="flex h-[768px] w-[1366px] flex-col overflow-hidden bg-[#efefef] font-['Noto_Sans','Open_Sans',sans-serif] text-black">
      <TopBar />
      <div className="flex min-h-0 flex-1">
        <Dock />
        <div className="flex min-w-0 flex-1 flex-col">
          <TitleBar />
          <MenuBar />
          <Toolbar />
          <div className="flex h-[553px] shrink-0 pt-px">
            <DisplaysPanel />
            <Center />
            <ViewsPanel />
          </div>
          <TimePanel />
        </div>
      </div>
    </div>
  );
}
